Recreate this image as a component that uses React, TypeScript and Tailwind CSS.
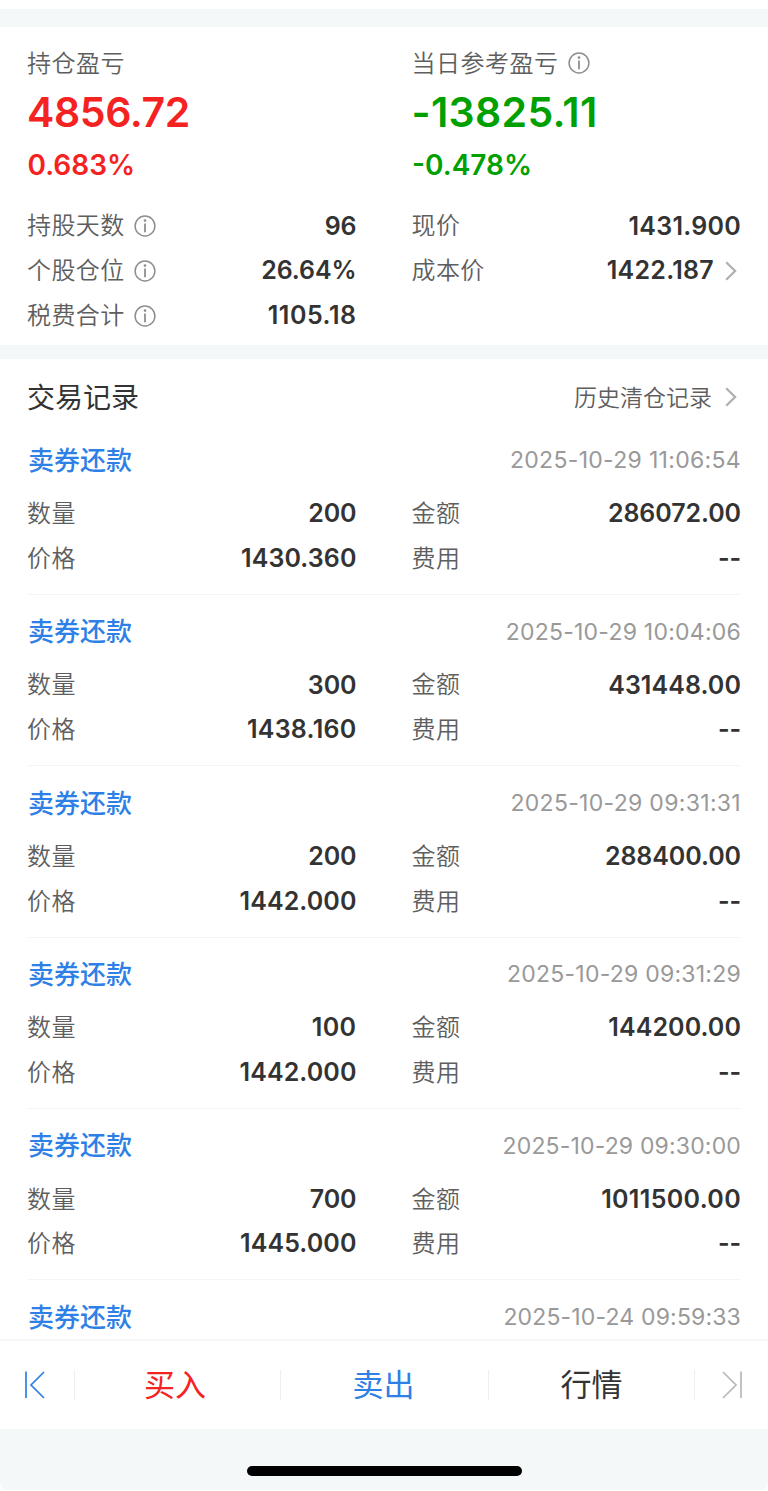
import React from 'react'

interface TradeRecord {
   time: string
   amount?: string
   price?: string
   total?: string
}

const records: TradeRecord[] = [
   { time: '2025-10-29 11:06:54', amount: '200', price: '1430.360', total: '286072.00' },
   { time: '2025-10-29 10:04:06', amount: '300', price: '1438.160', total: '431448.00' },
   { time: '2025-10-29 09:31:31', amount: '200', price: '1442.000', total: '288400.00' },
   { time: '2025-10-29 09:31:29', amount: '100', price: '1442.000', total: '144200.00' },
   { time: '2025-10-29 09:30:00', amount: '700', price: '1445.000', total: '1011500.00' },
   { time: '2025-10-24 09:59:33' },
]

/** 数字 1 偏窄，按出现次数补足字距 */
function spacing(text: string, base: number, extra: number) {
   const ones = text.split('1').length - 1
   return { letterSpacing: `${(base + (extra * ones) / text.length).toFixed(3)}px` }
}

function InfoIcon() {
   return (
      <svg className="ml-[9px] size-[22px] shrink-0" viewBox="0 0 22 22" fill="none">
         <circle cx="11" cy="11" r="9.9" stroke="#8e8e8e" strokeWidth="1.5" />
         <circle cx="11" cy="5.6" r="1.3" fill="#8e8e8e" />
         <path d="M11 8.6V17.2" stroke="#8e8e8e" strokeWidth="1.8" />
      </svg>
   )
}

function Chevron() {
   return (
      <svg className="mr-[4px] h-[20px] w-[12px] shrink-0" viewBox="0 0 12 20" fill="none">
         <path d="M1.2 1.2L10.1 10L1.2 18.8" stroke="#b0b0b0" strokeWidth="2.3" />
      </svg>
   )
}

interface RowProps {
   label: string
   value: string
   info?: boolean
   arrow?: boolean
}

function Row({ label, value, info, arrow }: RowProps) {
   return (
      <div className="flex h-[44.7px] items-center text-[24px]">
         <span className="font-[350] tracking-[0.4px] text-[#5e5e5e]">{label}</span>
         {info && <InfoIcon />}
         <span className="ml-auto text-[25px] font-semibold text-[#333]" style={spacing(value, -0.08, 1.4)}>
            {value}
         </span>
         {arrow && (
            <div className="ml-[11px] flex">
               <Chevron />
            </div>
         )}
      </div>
   )
}

function RecordItem({ time, amount, price, total }: TradeRecord) {
   return (
      <div className="mx-[27px] h-[171.35px] shrink-0 border-b border-[#f5f5f5] pt-[15px]">
         <div className="flex h-[44px] items-center justify-between">
            <span className="pl-px text-[26px] font-medium text-[#2e7fe6]">卖券还款</span>
            <span className="text-[23px] text-[#999]" style={spacing(time, 0.09, 1.4)}>
               {time}
            </span>
         </div>
         {amount && price && total && (
            <div className="mt-[9.3px] grid grid-cols-2 gap-x-[55px]">
               <Row label="数量" value={amount} />
               <Row label="金额" value={total} />
               <Row label="价格" value={price} />
               <Row label="费用" value="--" />
            </div>
         )}
      </div>
   )
}

interface ProfitProps {
   label: string
   value: string
   percent: string
   info?: boolean
}

function Profit({ label, value, percent, info }: ProfitProps) {
   return (
      <div>
         <div className="flex h-[44px] items-center text-[24px] font-[350] tracking-[0.5px] text-[#5e5e5e]">
            <span className="pt-[2px]">{label}</span>
            {info && <InfoIcon />}
         </div>
         <div className="flex h-[56px] items-center text-[41px] font-semibold" style={spacing(value, -0.4, 2.2)}>
            {value}
         </div>
         <div className="flex h-[48px] items-center pl-[0.5px] text-[28px] font-semibold">{percent}</div>
      </div>
   )
}

export default function App() {
   return (
      <div className="flex h-[1491px] w-[768px] flex-col overflow-hidden bg-white font-['Inter','Noto_Sans_CJK_SC',sans-serif]">
         <div className="mt-[9px] h-[18px] shrink-0 bg-[#f4f8f9]" />

         {/* 盈亏概览 */}
         <section className="h-[318px] shrink-0 px-[27px] pt-[14px]">
            <div className="grid grid-cols-2 gap-x-[55px]">
               <div className="text-[#f52222]">
                  <Profit label="持仓盈亏" value="4856.72" percent="0.683%" />
               </div>
               <div className="text-[#00a000]">
                  <Profit label="当日参考盈亏" value="-13825.11" percent="-0.478%" info />
               </div>
            </div>
            <div className="mt-[15px] grid grid-cols-2 gap-x-[55px]">
               <Row label="持股天数" value="96" info />
               <Row label="现价" value="1431.900" />
               <Row label="个股仓位" value="26.64%" info />
               <Row label="成本价" value="1422.187" arrow />
               <Row label="税费合计" value="1105.18" info />
            </div>
         </section>

         <div className="h-[14px] shrink-0 bg-[#f4f8f9]" />

         {/* 交易记录 */}
         <section className="flex h-[980px] shrink-0 flex-col overflow-hidden">
            <div className="flex h-[64.5px] shrink-0 items-center px-[27px] pt-[12px]">
               <span className="pt-[2px] text-[28px] text-[#333]">交易记录</span>
               <span className="mr-[13px] ml-auto pt-px text-[23px] font-[350] text-[#5e5e5e]">历史清仓记录</span>
               <Chevron />
            </div>
            {records.map((record) => (
               <RecordItem key={record.time} {...record} />
            ))}
         </section>

         {/* 底部操作栏 */}
         <nav className="flex h-[90px] shrink-0 items-center border-t-2 border-[#f8f8f8] text-[31px]">
            <div className="flex w-[74px] pl-[25px]">
               <svg className="h-[28px] w-[21px]" viewBox="0 0 21 28" fill="none" stroke="#2e7fe6" strokeWidth="1.7">
                  <path d="M1 .5V27M19 1L6 14L19 27" />
               </svg>
            </div>
            <div className="h-[30px] w-px bg-[#eee]" />
            <div className="w-[205px] pr-[5px] text-center text-[#f52222]">买入</div>
            <div className="h-[30px] w-px bg-[#eee]" />
            <div className="w-[207px] pr-[2px] text-center text-[#2e7fe6]">卖出</div>
            <div className="h-[30px] w-px bg-[#eee]" />
            <div className="w-[205px] text-center text-[#333]">行情</div>
            <div className="h-[30px] w-px bg-[#eee]" />
            <div className="flex flex-1 justify-end pr-[26px]">
               <svg className="h-[28px] w-[21px]" viewBox="0 0 21 28" fill="none" stroke="#b8b8b8" strokeWidth="1.7">
                  <path d="M20 .5V27M2 1L15 14L2 27" />
               </svg>
            </div>
         </nav>

         <div className="flex h-[61px] shrink-0 justify-center rounded-b-[8px] bg-[#f4f8f9] pt-[37px]">
            <div className="h-[10px] w-[275px] rounded-full bg-black" />
         </div>
      </div>
   )
}
